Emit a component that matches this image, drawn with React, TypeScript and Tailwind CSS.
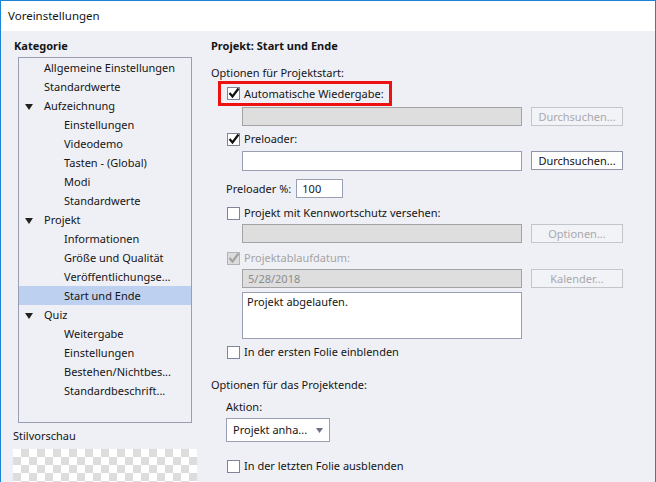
import React from "react";

const font = { fontFamily: "'Noto Sans', 'Open Sans', sans-serif" };

type Item = { label: string; level: 1 | 2; open?: boolean; selected?: boolean };

const items: Item[] = [
  { label: "Allgemeine Einstellungen", level: 1 },
  { label: "Standardwerte", level: 1 },
  { label: "Aufzeichnung", level: 1, open: true },
  { label: "Einstellungen", level: 2 },
  { label: "Videodemo", level: 2 },
  { label: "Tasten - (Global)", level: 2 },
  { label: "Modi", level: 2 },
  { label: "Standardwerte", level: 2 },
  { label: "Projekt", level: 1, open: true },
  { label: "Informationen", level: 2 },
  { label: "Größe und Qualität", level: 2 },
  { label: "Veröffentlichungse...", level: 2 },
  { label: "Start und Ende", level: 2, selected: true },
  { label: "Quiz", level: 1, open: true },
  { label: "Weitergabe", level: 2 },
  { label: "Einstellungen", level: 2 },
  { label: "Bestehen/Nichtbes...", level: 2 },
  { label: "Standardbeschrift...", level: 2 },
];

function Check({ checked, disabled }: { checked?: boolean; disabled?: boolean }) {
  return (
    <span
      className={`relative w-[13px] h-[13px] shrink-0 border ${
        disabled ? "bg-[#dcdcdc] border-[#b4b4b4]" : "bg-white border-[#7f8496]"
      }`}
    >
      {checked && (
        <svg width="14" height="14" viewBox="0 0 14 14" className="absolute -left-[1px] -top-[2px]">
          <path
            d="M2.5 7 L5.5 10.5 L11.5 2.5"
            fill="none"
            stroke={disabled ? "#a3a3a3" : "#111"}
            strokeWidth="2.2"
          />
        </svg>
      )}
    </span>
  );
}

function CheckRow({
  label,
  checked,
  disabled,
  className = "",
}: {
  label: string;
  checked?: boolean;
  disabled?: boolean;
  className?: string;
}) {
  return (
    <div className={`flex items-center h-4 ml-4 gap-[4px] ${className}`}>
      <Check checked={checked} disabled={disabled} />
      <span className={disabled ? "text-[#a4a4a4]" : ""}>{label}</span>
    </div>
  );
}

function Button({ label, disabled }: { label: string; disabled?: boolean }) {
  return (
    <div
      className={`w-[92px] h-[19px] flex items-center justify-center border ${
        disabled ? "border-[#c4c5ca] bg-[#f2f3f7] text-[#a9a9ad]" : "border-[#9095a8] bg-[#fdfdfe] text-[#111]"
      }`}
    >
      {label}
    </div>
  );
}

function Field({ disabled, children, className = "" }: { disabled?: boolean; children?: React.ReactNode; className?: string }) {
  return (
    <div
      className={`w-[280px] border flex items-center px-[5px] ${
        disabled ? "bg-[#dedede] border-[#a3a3a3] text-[#8c8c8c]" : "bg-white border-[#9aa0b3]"
      } ${className}`}
    >
      {children}
    </div>
  );
}

export default function App() {
  return (
    <div
      className="w-[656px] h-[482px] overflow-hidden flex flex-col bg-[#eff0f6] border-l border-t border-r border-[#1b84d8] text-[11px] text-[#151515] leading-4"
      style={font}
    >
      {/* Title bar */}
      <div className="h-[30px] shrink-0 bg-white flex items-center pl-[7px] text-[11.5px]">Voreinstellungen</div>

      <div className="flex flex-1">
        {/* Left column */}
        <div className="w-[198px] shrink-0 pl-[12px] flex flex-col">
          <div className="mt-[7px] pl-px font-bold h-4">Kategorie</div>
          <div className="ml-[5px] mt-[3px] w-[174px] h-[366px] border border-[#9a9eb2]">
            {items.map((it, i) => (
              <div
                key={i}
                className={`h-[19px] flex items-center ${it.selected ? "bg-[#bdd0ef]" : ""} ${
                  it.level === 1 ? "pl-[25px]" : "pl-[45px]"
                } relative`}
              >
                {it.open && (
                  <svg width="8" height="6" viewBox="0 0 8 6" className="absolute left-[6px] top-[8px]">
                    <path d="M0 0 H8 L4 6 Z" fill="#222" />
                  </svg>
                )}
                {it.label}
              </div>
            ))}
          </div>
          <div className="mt-[5px] h-4">Stilvorschau</div>
          <div className="mt-[5px] w-[184px] flex-1 bg-[conic-gradient(#dddddd_25%,#ffffff_0_50%,#dddddd_0_75%,#ffffff_0)] bg-[length:16px_16px]" />
        </div>

        {/* Right column */}
        <div className="flex-1 flex flex-col pl-[12px]">
          <div className="mt-[7px] font-bold h-4">Projekt: Start und Ende</div>
          <div className="mt-[11px] h-4">Optionen für Projektstart:</div>

          <div className="ml-[7px] w-fit border-[3px] border-[#ee1111] h-[25px] flex items-center pl-[6px] pr-[5px] gap-[4px]">
            <Check checked />
            <span>Automatische Wiedergabe:</span>
          </div>

          <div className="mt-[1px] ml-[31px] flex gap-[9px]">
            <Field disabled className="h-[19px]" />
            <Button label="Durchsuchen..." disabled />
          </div>

          <CheckRow label="Preloader:" checked className="mt-[5px]" />

          <div className="mt-[4px] ml-[31px] flex gap-[9px]">
            <Field className="h-[20px]" />
            <Button label="Durchsuchen..." />
          </div>

          <div className="mt-[8px] ml-[15px] flex items-center h-[19px] gap-[5px]">
            <span>Preloader %:</span>
            <div className="w-[47px] h-[19px] bg-white border border-[#9aa0b3] flex items-center pl-[5px]">100</div>
          </div>

          <CheckRow label="Projekt mit Kennwortschutz versehen:" className="mt-[7px]" />

          <div className="mt-[3px] ml-[31px] flex gap-[9px]">
            <Field disabled className="h-[19px]" />
            <Button label="Optionen..." disabled />
          </div>

          <CheckRow label="Projektablaufdatum:" checked disabled className="mt-[7px]" />

          <div className="mt-[3px] ml-[31px] flex gap-[9px]">
            <Field disabled className="h-[19px]">5/28/2018</Field>
            <Button label="Kalender..." disabled />
          </div>

          <div className="mt-[4px] ml-[31px] w-[280px] h-[47px] bg-white border border-[#9aa0b3] px-[4px] pt-[1px]">
            Projekt abgelaufen.
          </div>

          <CheckRow label="In der ersten Folie einblenden" className="mt-[5px]" />

          <div className="mt-[17px] h-4">Optionen für das Projektende:</div>
          <div className="mt-[6px] ml-[15px] h-4">Aktion:</div>

          <div className="mt-[3px] ml-[15px] w-[104px] h-[24px] bg-white border border-[#9aa0b3] flex items-center justify-between pl-[6px] pr-[6px]">
            <span>Projekt anha...</span>
            <svg width="7" height="5" viewBox="0 0 7 5">
              <path d="M0 0 H7 L3.5 5 Z" fill="#6c7182" />
            </svg>
          </div>

          <CheckRow label="In der letzten Folie ausblenden" className="mt-[16px]" />
        </div>
      </div>
    </div>
  );
}
